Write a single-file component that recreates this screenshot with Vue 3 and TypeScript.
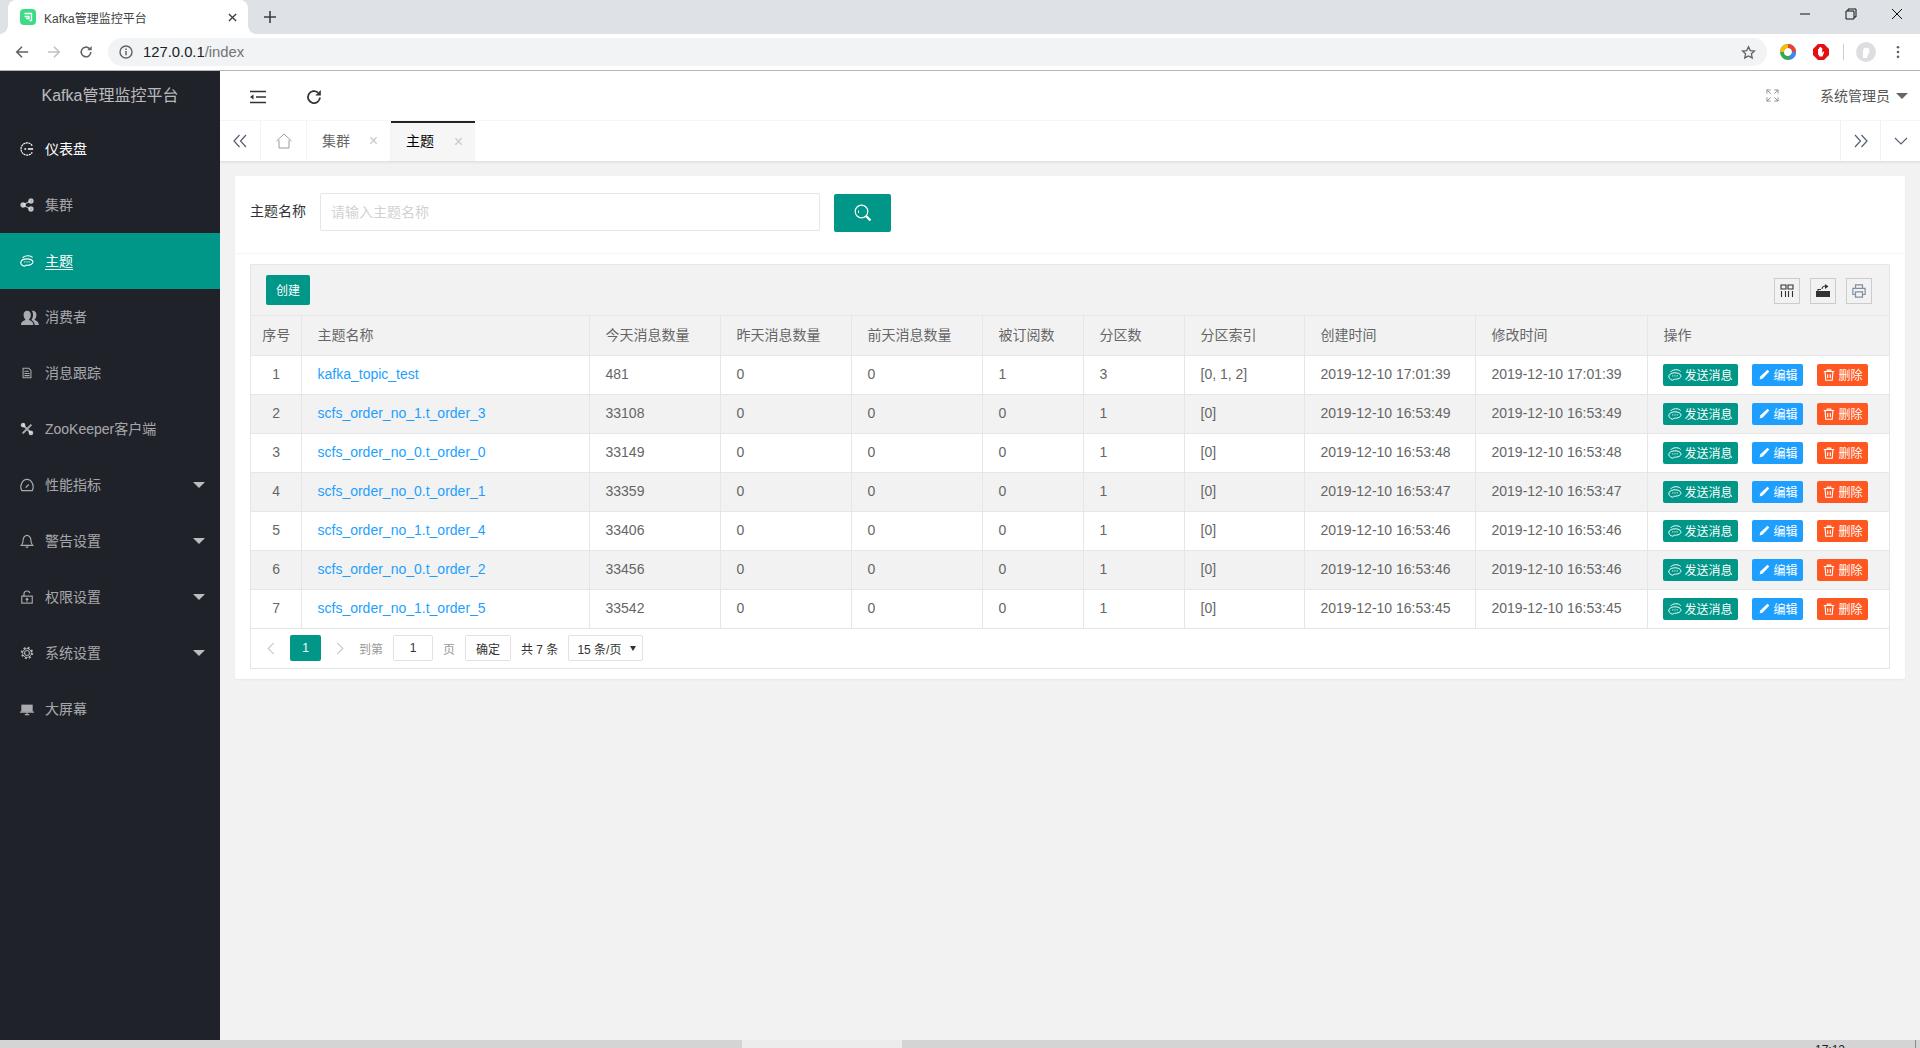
<script setup lang="ts">
interface NavItem { label: string; icon: string; active?: boolean; bright?: boolean; caret?: boolean }
const nav: NavItem[] = [
  { label: '仪表盘', icon: 'dash', bright: true },
  { label: '集群', icon: 'share' },
  { label: '主题', icon: 'chat', active: true },
  { label: '消费者', icon: 'users' },
  { label: '消息跟踪', icon: 'doc' },
  { label: 'ZooKeeper客户端', icon: 'tools' },
  { label: '性能指标', icon: 'gauge', caret: true },
  { label: '警告设置', icon: 'bell', caret: true },
  { label: '权限设置', icon: 'lock', caret: true },
  { label: '系统设置', icon: 'gear', caret: true },
  { label: '大屏幕', icon: 'screen' },
]
const cols = [50, 288, 131, 131, 131, 101, 101, 120, 171, 172, 242]
const heads = ['序号', '主题名称', '今天消息数量', '昨天消息数量', '前天消息数量', '被订阅数', '分区数', '分区索引', '创建时间', '修改时间', '操作']
const rows = [
  ['1', 'kafka_topic_test', '481', '0', '0', '1', '3', '[0, 1, 2]', '2019-12-10 17:01:39', '2019-12-10 17:01:39'],
  ['2', 'scfs_order_no_1.t_order_3', '33108', '0', '0', '0', '1', '[0]', '2019-12-10 16:53:49', '2019-12-10 16:53:49'],
  ['3', 'scfs_order_no_0.t_order_0', '33149', '0', '0', '0', '1', '[0]', '2019-12-10 16:53:48', '2019-12-10 16:53:48'],
  ['4', 'scfs_order_no_0.t_order_1', '33359', '0', '0', '0', '1', '[0]', '2019-12-10 16:53:47', '2019-12-10 16:53:47'],
  ['5', 'scfs_order_no_1.t_order_4', '33406', '0', '0', '0', '1', '[0]', '2019-12-10 16:53:46', '2019-12-10 16:53:46'],
  ['6', 'scfs_order_no_0.t_order_2', '33456', '0', '0', '0', '1', '[0]', '2019-12-10 16:53:46', '2019-12-10 16:53:46'],
  ['7', 'scfs_order_no_1.t_order_5', '33542', '0', '0', '0', '1', '[0]', '2019-12-10 16:53:45', '2019-12-10 16:53:45'],
]
</script>

<template>
  <div class="page">
    <div class="tabstrip">
      <div class="ctab">
        <svg class="fav" viewBox="0 0 16 16"><rect width="16" height="16" rx="4" fill="#3ddc84"/><path d="M4.500 4.500h7v7h-2M4.500 7.500h4.500v2H6" fill="none" stroke="#fff" stroke-width="1.300"/></svg>
        <span class="ctab-title">Kafka管理监控平台</span>
        <svg class="ctab-x" viewBox="0 0 10 10"><path d="M1 1l8 8M9 1l-8 8" stroke="#3c4043" stroke-width="1.500"/></svg>
      </div>
      <svg class="plus" viewBox="0 0 12 12"><path d="M6 0v12M0 6h12" stroke="#3c4043" stroke-width="1.600"/></svg>
      <div class="winbtns">
        <svg viewBox="0 0 12 12"><path d="M1 6h10" stroke="#111" stroke-width="1"/></svg>
        <svg viewBox="0 0 12 12"><path d="M3 3V1h8v8H9M1 3h8v8H1z" fill="none" stroke="#111" stroke-width="1"/></svg>
        <svg viewBox="0 0 12 12"><path d="M1 1l10 10M11 1L1 11" stroke="#111" stroke-width="1"/></svg>
      </div>
    </div>
    <div class="toolbar">
      <svg class="nav-ic" viewBox="0 0 16 16"><path d="M15 8H2M8 2L2 8l6 6" fill="none" stroke="#5f6368" stroke-width="1.800"/></svg>
      <svg class="nav-ic" viewBox="0 0 16 16"><path d="M1 8h13M8 2l6 6-6 6" fill="none" stroke="#bdc1c6" stroke-width="1.800"/></svg>
      <svg class="nav-ic" viewBox="0 0 16 16"><path d="M13.500 8a5.500 5.500 0 1 1-1.600-3.900" fill="none" stroke="#5f6368" stroke-width="1.800"/><path d="M14.500 1v5h-5z" fill="#5f6368"/></svg>
      <div class="omni">
        <svg class="info" viewBox="0 0 14 14"><circle cx="7" cy="7" r="6" fill="none" stroke="#5f6368" stroke-width="1.400"/><path d="M7 6v4.200M7 3.600v1.400" stroke="#5f6368" stroke-width="1.500"/></svg>
        <span class="url">127.0.0.1<span class="url-dim">/index</span></span>
        <svg class="star" viewBox="0 0 16 16"><path d="M8 1.800l1.900 4.100 4.500.5-3.300 3 .9 4.400L8 11.600l-4 2.200.9-4.400-3.300-3 4.500-.5z" fill="none" stroke="#5f6368" stroke-width="1.400"/></svg>
      </div>
      <svg class="ext" viewBox="0 0 16 16"><circle cx="8" cy="8" r="6" fill="none" stroke="#34a853" stroke-width="4"/><path d="M2 8a6 6 0 0 1 6-6" fill="none" stroke="#fbbc05" stroke-width="4"/><path d="M8 2a6 6 0 0 1 6 6" fill="none" stroke="#ea4335" stroke-width="4"/><path d="M14 8a6 6 0 0 1-4 5.600" fill="none" stroke="#4285f4" stroke-width="4"/></svg>
      <svg class="ext ext2" viewBox="0 0 16 16"><path d="M5 0h6l5 5v6l-5 5H5l-5-5V5z" fill="#e60f0f"/><path d="M5 8V5h1v2-3.500h1V7 3h1.200v4-3h1v5l1-1.500 1 .5L9.500 12.500H6.500L5 10z" fill="#fff"/></svg>
      <div class="sep"></div>
      <svg class="avatar" viewBox="0 0 20 20"><circle cx="10" cy="10" r="10" fill="#dcdee0"/><path d="M7 16V9a3.200 3.200 0 0 1 6.400 0c0 3-2 3.500-2.400 7" fill="#fff"/></svg>
      <svg class="dots" viewBox="0 0 4 16"><circle cx="2" cy="2.500" r="1.500" fill="#5f6368"/><circle cx="2" cy="8" r="1.500" fill="#5f6368"/><circle cx="2" cy="13.500" r="1.500" fill="#5f6368"/></svg>
    </div>

    <div class="app">
      <aside class="side">
        <div class="logo">Kafka管理监控平台</div>
        <ul class="menu">
          <li v-for="n in nav" :key="n.label" class="mi" :class="{ active: n.active, bright: n.bright }">
            <svg class="mi-ic" :class="'ic-' + n.icon" viewBox="0 0 16 16" fill="none" stroke="currentColor" stroke-width="1.300">
              <template v-if="n.icon === 'dash'"><path d="M14 4.200A7 7 0 1 0 14 11.800" stroke-dasharray="2.400 .6"/><path d="M9 8h6M5 8h2" stroke-width="1.500"/></template>
              <template v-else-if="n.icon === 'share'"><circle cx="3.500" cy="8" r="2.500" fill="currentColor"/><circle cx="12.500" cy="3.500" r="2.500" fill="currentColor"/><circle cx="12.500" cy="12.500" r="2.500" fill="currentColor"/><path d="M12 3.500L3.500 8l8.500 4.500"/></template>
              <template v-else-if="n.icon === 'chat'"><path d="M3 4.500C5 1.500 12 1 14.500 4M5 14c-3-1-4.500-3-4-5 .8-2.500 4-3.500 7-3.500s6.500 1 6.800 3.500c.2 2.500-3.800 4-7.300 3.800z"/><path d="M5 9h1M7.500 9h1M10 9h1" stroke-width="1.500"/></template>
              <template v-else-if="n.icon === 'users'"><path d="M0 15c0-3 2.500-3.500 4-4.500-1-1-1.700-2.500-1.700-4.500C2.300 4 3.500 2.500 5.500 2.500S8.700 4 8.700 6c0 2-.7 3.500-1.700 4.500 1.500 1 4 1.500 4 4.500z" fill="currentColor" stroke="none"/><path d="M9.500 2.700c.3-.1.700-.2 1-.2 2 0 3.200 1.500 3.200 3.500 0 2-.7 3.500-1.700 4.500 1.500 1 3.800 1.500 3.800 4.500h-3.600c-.2-2-1.500-3.500-3-4.300 1-1.500 1.500-3 1.500-4.700 0-1.500-.4-2.700-1.200-3.800z" fill="currentColor" stroke="none"/></template>
              <template v-else-if="n.icon === 'doc'"><path d="M3.500 2.500h6.500l2.500 2.500v8.500h-9z" stroke-width="1.200"/><path d="M5 6h5M5 8.500h6M5 11h6" stroke-width="1.200"/></template>
              <template v-else-if="n.icon === 'tools'"><path d="M3 3l10 10M13 3L3 13" stroke-width="2.400"/><circle cx="3.500" cy="3.500" r="2" fill="currentColor"/><circle cx="12.500" cy="12.500" r="2" fill="currentColor"/></template>
              <template v-else-if="n.icon === 'gauge'"><path d="M2 14.500C-1 8.500 3 1.500 8 1.500s9 7 6 13z"/><path d="M6.500 11l3.500-3.500" stroke-width="1.500"/></template>
              <template v-else-if="n.icon === 'bell'"><path d="M1.500 13c1.500-1.500 2-3 2-5.500C3.500 4.500 5.500 1.500 8 1.500s4.500 3 4.500 6c0 2.500.5 4 2 5.500z"/><path d="M6.500 15h3" stroke-width="1.500"/></template>
              <template v-else-if="n.icon === 'lock'"><rect x="2" y="7" width="12" height="8"/><path d="M4.500 7V4.500a3.500 3.500 0 0 1 6.800-1M8 13.500V9.500M6.500 11L8 9.500 9.500 11"/></template>
              <template v-else-if="n.icon === 'gear'"><circle cx="8" cy="8" r="2.800"/><circle cx="8" cy="8" r="6" stroke-width="2.200" stroke-dasharray="2.200 2.510"/><circle cx="8" cy="8" r="5" stroke-width="1"/></template>
              <template v-else><path d="M1.500 3h13v8h-13z" fill="currentColor" stroke="none"/><path d="M0 11.500h16M8 11.500v3M5.500 14.500h5"/></template>
            </svg>
            <span class="mi-text" :class="{ under: n.active }">{{ n.label }}</span>
            <i v-if="n.caret" class="caret"></i>
          </li>
        </ul>
      </aside>

      <main class="main">
        <header class="head">
          <svg class="hd-ic" viewBox="0 0 16 16"><path d="M0 2.500h16M6 8h10M0 13.500h16" stroke="#333" stroke-width="1.500" fill="none"/><path d="M0 8l3.500-2.500v5z" fill="#333"/></svg>
          <svg class="hd-ic hd-ic2" viewBox="0 0 16 16"><path d="M14 8.500A6 6 0 1 1 12 3.600" fill="none" stroke="#333" stroke-width="1.800"/><path d="M14.800 1v5.500H9.300z" fill="#333"/></svg>
          <div class="hd-right">
            <svg class="full" viewBox="0 0 14 14"><path d="M1 5V1h4M1 1l4 4M9 1h4v4M13 1L9 5M1 9v4h4M1 13l4-4M13 9v4H9M13 13L9 9" fill="none" stroke="#8a8a8a" stroke-width="1"/></svg>
            <span class="user">系统管理员</span><i class="ucaret"></i>
          </div>
        </header>
        <div class="tabs">
          <div class="t-btn"><svg viewBox="0 0 14 14" class="t-chev"><path d="M6.500 1L1 7l5.500 6M13 1L7.500 7l5.500 6" fill="none" stroke="#555e70" stroke-width="1.200"/></svg></div>
          <div class="t-home"><svg viewBox="0 0 16 16" class="t-h"><path d="M.5 8L8 1l7.500 7M3 7v8h10V7" fill="none" stroke="#9a9a9a" stroke-width="1"/></svg></div>
          <div class="t-tab"><span>集群</span><b class="t-x">×</b></div>
          <div class="t-tab on"><span>主题</span><b class="t-x">×</b></div>
          <div class="t-fill"></div>
          <div class="t-btn t-r"><svg viewBox="0 0 14 14" class="t-chev"><path d="M1 1l5.500 6L1 13M7.500 1L13 7l-5.500 6" fill="none" stroke="#555e70" stroke-width="1.200"/></svg></div>
          <div class="t-btn t-r"><svg viewBox="0 0 14 8" class="t-down"><path d="M1 1l6 6 6-6" fill="none" stroke="#555e70" stroke-width="1.100"/></svg></div>
        </div>

        <section class="body">
          <div class="card">
            <form class="search" @submit.prevent>
              <label class="s-label">主题名称</label>
              <input class="s-input" placeholder="请输入主题名称" />
              <button class="s-btn" type="button">
                <svg viewBox="0 0 18 18" class="s-ic"><circle cx="7.500" cy="7.500" r="6.300" fill="none" stroke="#fff" stroke-width="1.200"/><path d="M12 12l4.500 4.500" fill="none" stroke="#fff" stroke-width="2.400"/><path d="M4.500 9V6.500" fill="none" stroke="#fff" stroke-width="1"/></svg>
              </button>
            </form>
            <div class="tbl">
              <div class="tbar">
                <button class="create" type="button">创建</button>
                <div class="tools">
                  <span class="tool"><svg viewBox="0 0 14 14"><path d="M1 1h5v4H1zM8 1h5v4H8zM1.500 7v6M5.500 7v6M8.500 7v6M12.500 7v6" fill="none" stroke="#333" stroke-width="1.100"/></svg></span>
                  <span class="tool"><svg viewBox="0 0 16 14"><path d="M1 7h14v6H1z" fill="#333"/><path d="M3 7V5.500h3M7 5c0-2 2-3 4-3" fill="none" stroke="#333" stroke-width="1.100"/><path d="M10 0l3.500 2.500L10 5z" fill="#333"/></svg></span>
                  <span class="tool"><svg viewBox="0 0 16 16"><path d="M4 5V1h8v4M4 12H1V5h14v7h-3M4 9h8v6H4z" fill="none" stroke="#7f8f9f" stroke-width="1.400"/></svg></span>
                </div>
              </div>
              <table>
                <colgroup><col v-for="(c, i) in cols" :key="i" :style="{ width: c + 'px' }" /></colgroup>
                <thead><tr><th v-for="(h, i) in heads" :key="h" :class="{ ctr: i === 0 }">{{ h }}</th></tr></thead>
                <tbody>
                  <tr v-for="r in rows" :key="r[0]">
                    <td v-for="(v, i) in r" :key="i" :class="{ ctr: i === 0, link: i === 1 }">{{ v }}</td>
                    <td class="ops">
                      <button class="op green" type="button"><svg viewBox="0 0 16 16" class="op-ic"><path d="M3 4.500C5 1.500 12 1 14.500 4M5 14c-3-1-4.500-3-4-5 .8-2.500 4-3.500 7-3.500s6.500 1 6.800 3.500c.2 2.500-3.800 4-7.300 3.800z" fill="none" stroke="#fff" stroke-width="1.100"/><path d="M5 9h1M7.500 9h1M10 9h1" stroke="#fff" stroke-width="1.300"/></svg>发送消息</button>
                      <button class="op blue" type="button"><svg viewBox="0 0 16 16" class="op-ic"><path d="M3 13l1-3.500L12 2l2 2-7.500 8z" fill="#fff"/></svg>编辑</button>
                      <button class="op red" type="button"><svg viewBox="0 0 16 16" class="op-ic"><path d="M2 4h12M6 4V2.500h4V4M3.500 4l.8 10h7.400l.8-10M6.500 7v4.500M9.500 7v4.500" fill="none" stroke="#fff" stroke-width="1.300"/></svg>删除</button>
                    </td>
                  </tr>
                </tbody>
              </table>
              <div class="pager">
                <svg class="p-arrow" viewBox="0 0 8 14"><path d="M7 1L1 7l6 6" fill="none" stroke="#c8c8c8" stroke-width="1.200"/></svg>
                <span class="p-cur">1</span>
                <svg class="p-arrow p-next" viewBox="0 0 8 14"><path d="M1 1l6 6-6 6" fill="none" stroke="#c8c8c8" stroke-width="1.200"/></svg>
                <span class="p-dim">到第</span>
                <span class="p-box p-num">1</span>
                <span class="p-dim">页</span>
                <span class="p-box p-ok">确定</span>
                <span class="p-total">共 7 条</span>
                <span class="p-box p-size">15 条/页<i class="p-caret"></i></span>
              </div>
            </div>
          </div>
        </section>
      </main>
    </div>
    <div class="hscroll"><div class="hthumb"></div><span class="clock">17:12</span><i class="hline"></i></div>
  </div>
</template>

<style>
html, body { margin: 0; padding: 0; overflow: hidden; }
</style>

<style scoped>
* { box-sizing: border-box; }
.page { width: 1920px; height: 1048px; display: flex; flex-direction: column; overflow: hidden; background: #f2f2f2;
  font-family: "Liberation Sans", "Noto Sans CJK SC", sans-serif; font-size: 14px; color: #666; }
.tabstrip { height: 34px; background: #dee1e6; display: flex; align-items: flex-end; padding-left: 8px; flex: none; }
.ctab { width: 240px; height: 34px; background: #fff; border-radius: 8px 8px 0 0; display: flex; align-items: center; padding: 0 12px; position: relative; }
.ctab::before, .ctab::after { content: ""; position: absolute; bottom: 0; width: 8px; height: 8px; }
.ctab::before { left: -8px; background: radial-gradient(circle at 0 0, #dee1e6 7.500px, #fff 8px); }
.ctab::after { right: -8px; background: radial-gradient(circle at 100% 0, #dee1e6 7.500px, #fff 8px); }
.fav { width: 16px; height: 16px; flex: none; }
.ctab-title { font-size: 12px; color: #3c4043; margin-left: 8px; flex: 1; }
.ctab-x { width: 9px; height: 9px; flex: none; margin-right: -1px; }
.plus { width: 12px; height: 12px; margin: 0 0 11px 16px; flex: none; }
.winbtns { margin-left: auto; height: 34px; display: flex; align-items: flex-start; padding: 8px 17px 0 0; gap: 34px; }
.winbtns svg { width: 12px; height: 12px; }
.toolbar { height: 37px; flex: none; background: #fff; border-bottom: 1px solid #b5b5b5; display: flex; align-items: center; padding: 0 0 0 15px; }
.nav-ic { width: 14px; height: 14px; margin-right: 18px; flex: none; }
.omni { margin-left: -3px; width: 1659px; height: 28px; background: #f1f3f4; border-radius: 14px; display: flex; align-items: center; padding: 0 11px; flex: none; }
.info { width: 14px; height: 14px; flex: none; }
.url { font-size: 14.800px; color: #202124; margin-left: 10px; flex: 1; }
.url-dim { color: #70757a; }
.star { width: 15px; height: 15px; flex: none; }
.ext { width: 16px; height: 16px; flex: none; margin-left: 13px; }
.ext2 { margin-left: 17px; }
.sep { width: 1px; height: 16px; background: #ccc; margin-left: 14px; flex: none; }
.avatar { width: 20px; height: 20px; margin-left: 12px; flex: none; }
.dots { width: 4px; height: 14px; margin-left: 20px; flex: none; }
.app { flex: 1; display: flex; min-height: 0; }
.side { width: 220px; flex: none; background: #20222a; }
.logo { height: 50px; line-height: 49px; text-align: center; color: rgba(255,255,255,.7); font-size: 16px; }
.menu { list-style: none; margin: 0; padding: 0; }
.mi { height: 56px; display: flex; align-items: center; padding-left: 20px; color: rgba(255,255,255,.62); position: relative; font-size: 14px; }
.mi.bright { color: #fff; }
.mi.active { background: #009688; color: #fff; }
.mi-ic { width: 14px; height: 14px; flex: none; margin-right: 11px; overflow: visible; }
.mi-ic.ic-users { width: 18px; height: 18px; margin-left: 1px; margin-right: 6px; }
.mi-text { margin-top: -2px; }
.mi-text.under { text-decoration: underline; text-underline-offset: 3px; }
.caret { position: absolute; right: 15px; top: 25px; width: 0; height: 0; border: 6px solid transparent; border-top: 6px solid rgba(255,255,255,.7); border-bottom: 0; }
.main { flex: 1; display: flex; flex-direction: column; min-width: 0; }
.head { height: 49px; flex: none; background: #fff; display: flex; align-items: center; padding: 2px 12px 0 30px; position: relative; }
.hd-ic { width: 16px; height: 16px; flex: none; }
.hd-ic2 { margin-left: 40px; }
.hd-right { margin-left: auto; margin-top: -2px; display: flex; align-items: center; }
.full { width: 13px; height: 13px; margin-right: 41px; }
.user { font-size: 14px; color: #555; margin-top: -1px; }
.ucaret { width: 0; height: 0; border: 6px solid transparent; border-top: 6px solid #666; border-bottom: 0; margin-left: 6px; }
.tabs { height: 42px; flex: none; background: #fff; display: flex; border-top: 1px solid #f6f6f6; border-bottom: 1px solid #e2e2e2; box-shadow: 0 1px 2px rgba(0,0,0,.06); }
.t-btn { width: 40px; display: flex; align-items: center; justify-content: center; }
.t-r { border-left: 1px solid #f0f0f0; }
.t-chev { width: 14px; height: 14px; }
.t-down { width: 14px; height: 8px; }
.t-home { width: 47px; border-left: 1px solid #f3f3f3; border-right: 1px solid #f3f3f3; display: flex; align-items: center; justify-content: center; }
.t-h { width: 16px; height: 16px; }
.t-tab { width: 84px; display: flex; align-items: center; padding-left: 15px; color: #666; position: relative; border-right: 1px solid #f3f3f3; }
.t-tab span { margin-bottom: 2px; }
.t-tab.on { color: #000; background: #f6f6f6; border-top: 2px solid #20222a; border-right: 0; }
.t-tab.on span { margin-bottom: 4px; }
.t-x { position: absolute; right: 12px; top: 50%; transform: translateY(-50%); color: #c9c9c9; font-weight: 400; font-size: 16px; }
.t-fill { flex: 1; }
.body { flex: 1; padding: 14px 15px 0; min-height: 0; }
.card { background: #fff; border-radius: 2px; padding-bottom: 10px; box-shadow: 0 1px 2px rgba(0,0,0,.05); }
.search { height: 78px; display: flex; align-items: flex-start; padding: 17px 0 0 15px; border-bottom: 1px solid #f6f6f6; }
.s-label { color: #333; width: 56px; flex: none; line-height: 37px; }
.s-input { width: 500px; height: 38px; margin-left: 14px; border: 1px solid #e6e6e6; border-radius: 2px; padding: 0 10px; font: inherit; color: #333; outline: none; }
.s-input::placeholder { color: #d2d2d2; }
.s-btn { width: 57px; height: 38px; margin: 1px 0 0 14px; background: #009688; border: 0; border-radius: 2px; display: flex; align-items: center; justify-content: center; padding: 0; }
.s-ic { width: 18px; height: 18px; }
.tbl { margin: 10px 15px 0; border: 1px solid #e6e6e6; }
.tbar { height: 51px; background: #f2f2f2; display: flex; align-items: flex-start; padding: 10px 15px 0; border-bottom: 1px solid #e6e6e6; }
.create { width: 44px; height: 30px; background: #009688; border: 0; border-radius: 2px; color: #fff; font: inherit; font-size: 12px; padding: 0 0 2px; }
.tools { margin-left: auto; display: flex; gap: 10px; margin-right: 2px; margin-top: 3px; }
.tool { width: 26px; height: 26px; border: 1px solid #ccc; display: flex; align-items: center; justify-content: center; }
.tool svg { width: 16px; height: 14px; }
table { width: 1638px; border-collapse: collapse; table-layout: fixed; font-size: 14px; color: #666; }
th, td { height: 39px; padding: 0 14px 2px 16px; text-align: left; font-weight: 400; border-left: 1px solid #e6e6e6; border-bottom: 1px solid #e6e6e6; white-space: nowrap; overflow: hidden; }
th:first-child, td:first-child { border-left: 0; }
thead tr { background: #f2f2f2; }
tbody tr:nth-child(even) { background: #f2f2f2; }
.ctr { text-align: center; padding: 0 0 2px 1px; }
.link { color: #1e9fff; }
td.ops { padding: 0 15px; font-size: 0; }
.op { height: 22px; border: 0; border-radius: 2px; color: #fff; font: inherit; font-size: 12px; padding: 0 5px; margin-right: 14px; display: inline-flex; align-items: center; vertical-align: middle; }
.op-ic { width: 14px; height: 14px; margin-right: 3px; flex: none; }
.green { background: #009688; }
.blue { background: #1e9fff; }
.red { background: #ff5722; margin-right: 0; }
.pager { height: 39px; display: flex; align-items: center; padding-left: 16px; font-size: 12px; color: #333; }
.p-arrow { width: 8px; height: 13px; flex: none; margin-right: 15px; }
.p-next { margin-left: 15px; margin-right: 15px; }
.p-cur { width: 31px; height: 26px; background: #009688; color: #fff; border-radius: 2px; display: flex; align-items: center; justify-content: center; }
.p-dim { color: #999; }
.p-box { height: 26px; border: 1px solid #e2e2e2; border-radius: 2px; display: flex; align-items: center; justify-content: center; background: #fff; }
.p-num { width: 40px; margin: 0 10px; }
.p-ok { width: 46px; margin-left: 10px; }
.p-total { margin-left: 10px; }
.p-size { width: 75px; margin-left: 10px; padding-left: 8px; justify-content: flex-start; position: relative; }
.p-caret { position: absolute; right: 6px; top: 10px; width: 0; height: 0; border: 3.500px solid transparent; border-top: 5px solid #333; border-bottom: 0; }
.hscroll { height: 8px; flex: none; background: #d4d4d4; position: relative; overflow: hidden; }
.hthumb { position: absolute; left: 742px; width: 160px; top: 0; bottom: 0; background: #ececec; }
.clock { position: absolute; left: 1815px; top: 3px; font-size: 12px; color: #222; line-height: 14px; }
.hline { position: absolute; left: 1915px; top: 0; bottom: 0; width: 1px; background: #888; }
</style>
